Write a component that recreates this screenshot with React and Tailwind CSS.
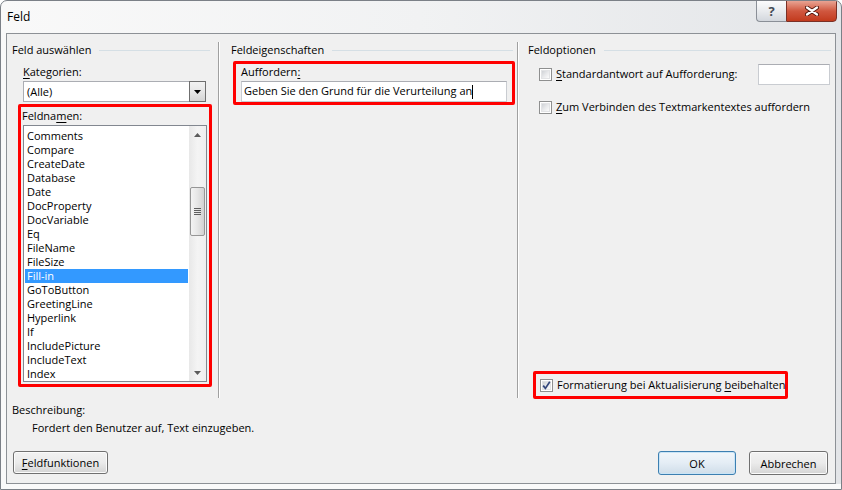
import React from 'react';

const fieldNames = [
  'Comments', 'Compare', 'CreateDate', 'Database', 'Date', 'DocProperty', 'DocVariable', 'Eq', 'FileName',
  'FileSize', 'Fill-in', 'GoToButton', 'GreetingLine', 'Hyperlink', 'If', 'IncludePicture', 'IncludeText', 'Index',
];

const CheckBox = ({ checked }) => (
  <div className="w-[13px] h-[13px] flex-shrink-0 border border-[#8e8f8f] bg-white p-px">
    <div className="relative w-full h-full border border-[#e2e3e5] bg-gradient-to-br from-[#cfd2d6] via-[#e8e9eb] to-[#fbfbfb]">
      {checked && (
        <svg className="absolute -left-[1px] -top-[1px]" width="9" height="9" viewBox="0 0 9 9">
          <path d="M1.2 4.6 L3.4 7.4 L7.8 0.8" fill="none" stroke="#34477c" strokeWidth="1.7" />
        </svg>
      )}
    </div>
  </div>
);

const GroupHeading = ({ title, pad }) => (
  <div className={`flex items-center h-[16px] ${pad}`}>
    <span className="leading-[16px] whitespace-nowrap">{title}</span>
    <div className="flex-1 h-px bg-[#d5dfe5] ml-[8px]" />
  </div>
);

const ScrollBar = () => (
  <div className="w-[17px] flex flex-col bg-gradient-to-r from-[#e8e8e8] via-[#f4f4f4] to-[#efefef]">
    <div className="h-[17px] flex items-center justify-center">
      <svg width="7" height="4" viewBox="0 0 7 4"><path d="M0 4 L3.5 0 L7 4Z" fill="#5c5c5c" /></svg>
    </div>
    <div className="h-[44px]" />
    <div className="h-[49px] mx-px rounded-[2px] border border-[#969696] bg-gradient-to-r from-[#f4f4f4] via-[#e6e6e6] to-[#d2d2d2] flex flex-col items-center justify-center gap-px">
      <div className="w-[7px] h-px bg-[#5e5e5e]" />
      <div className="w-[7px] h-px bg-[#5e5e5e]" />
      <div className="w-[7px] h-px bg-[#5e5e5e]" />
      <div className="w-[7px] h-px bg-[#5e5e5e]" />
    </div>
    <div className="flex-1" />
    <div className="h-[17px] flex items-center justify-center">
      <svg width="7" height="4" viewBox="0 0 7 4"><path d="M0 0 L3.5 4 L7 0Z" fill="#5c5c5c" /></svg>
    </div>
  </div>
);

const Separator = () => (
  <div className="flex h-[356px]">
    <div className="w-px bg-[#a0a0a0]" />
    <div className="w-px bg-white" />
  </div>
);

export default function App() {
  return (
    <div className="w-[842px] h-[490px] flex flex-col overflow-hidden border border-[#7b8087] rounded-t-[7px] bg-gradient-to-r from-[#f9f9f9] via-[#f1f2f3] to-[#e3e5e8] font-['Open_Sans',sans-serif] text-[11px] text-black">
      {/* title bar */}
      <div className="h-[32px] flex items-start justify-between pl-[6px] pr-[4px]">
        <span className="mt-[8px] text-[12px] leading-[16px]">Feld</span>
        <div className="flex -mt-px">
          <div className="w-[30px] h-[22px] flex items-center justify-center rounded-bl-[4px] border border-[#8a8f97] border-r-0 bg-gradient-to-b from-[#fbfbfc] via-[#e9ebee] to-[#d3d7dd]">
            <span className="text-[13px] font-bold leading-none text-[#434a55]">?</span>
          </div>
          <div className="w-[51px] h-[22px] flex items-center justify-center rounded-br-[4px] border border-[#7a3026] bg-gradient-to-b from-[#e8a393] via-[#d0573f] to-[#c23a1c]">
            <svg width="14" height="10" viewBox="0 0 14 10">
              <path d="M2 1.5 L12 8.5 M12 1.5 L2 8.5" stroke="#4d150c" strokeWidth="4" strokeLinecap="round" />
              <path d="M2 1.5 L12 8.5 M12 1.5 L2 8.5" stroke="#ffffff" strokeWidth="2.2" strokeLinecap="round" />
            </svg>
          </div>
        </div>
      </div>

      {/* client area */}
      <div className="mx-[5px] h-[451px] flex-shrink-0 border border-[#8d9196] bg-[#f0f0f0] flex flex-col">
        <div className="flex h-[365px] pt-[8px]">
          {/* Feld auswählen */}
          <div className="w-[211px] flex flex-col">
            <GroupHeading title="Feld auswählen" pad="pl-[5px] pr-[8px]" />
            <div className="mt-[6px] pl-[16px] leading-[16px]"><u className="underline-offset-2">K</u>ategorien:</div>
            <div className="mt-[1px] ml-[16px] w-[183px] h-[21px] flex border border-[#abadb3] bg-white">
              <div className="flex-1 pl-[3px] leading-[19px]">(Alle)</div>
              <div className="w-[17px] -my-px -mr-px flex items-center justify-center border border-[#6f6f6f] bg-gradient-to-b from-[#f2f2f2] via-[#e6e6e6] to-[#d4d4d4]">
                <svg width="7" height="4" viewBox="0 0 7 4"><path d="M0 0 L3.5 4 L7 0Z" fill="#000" /></svg>
              </div>
            </div>
            <div className="mt-[2px] ml-[11px] w-[194px] h-[283px] border-[3px] border-[#ff0000] rounded-[2px] flex flex-col">
              <div className="pl-px pt-px leading-[16px]">Feldna<u className="underline-offset-2">m</u>en:</div>
              <div className="ml-[2px] mt-px w-[184px] h-[257px] border border-[#828790] bg-white flex">
                <div className="flex-1 pt-[3px] px-px">
                  {fieldNames.map((name) => (
                    <div
                      key={name}
                      className={`h-[14px] leading-[14px] pl-[2px] ${name === 'Fill-in' ? 'bg-[#3399ff] text-white' : ''}`}
                    >
                      {name}
                    </div>
                  ))}
                </div>
                <ScrollBar />
              </div>
            </div>
          </div>

          <Separator />

          {/* Feldeigenschaften */}
          <div className="w-[297px] flex flex-col">
            <GroupHeading title="Feldeigenschaften" pad="pl-[11px] pr-[4px]" />
            <div className="mt-[3px] ml-[13px] w-[282px] h-[44px] border-[3px] border-[#ff0000] rounded-[2px] flex flex-col">
              <div className="pl-[5px] leading-[16px]">Auffordern<u className="underline-offset-2">:</u></div>
              <div className="mt-px ml-[5px] w-[266px] h-[21px] flex items-center pl-[2px] border border-[#c9ccd1] border-t-[#abadb3] bg-white whitespace-nowrap">
                Geben Sie den Grund für die Verurteilung an
                <span className="w-px h-[14px] bg-black" />
              </div>
            </div>
          </div>

          <Separator />

          {/* Feldoptionen */}
          <div className="flex-1 flex flex-col">
            <GroupHeading title="Feldoptionen" pad="pl-[9px] pr-[4px]" />
            <div className="mt-[6px] h-[21px] flex items-center pl-[20px] pr-[5px]">
              <CheckBox />
              <span className="ml-[4px] whitespace-nowrap"><u className="underline-offset-2">S</u>tandardantwort auf Aufforderung:</span>
              <div className="ml-auto w-[72px] h-[21px] border border-[#c9ccd1] border-t-[#abadb3] bg-white" />
            </div>
            <div className="mt-[14px] h-[16px] flex items-center pl-[20px]">
              <CheckBox />
              <span className="ml-[4px] whitespace-nowrap"><u className="underline-offset-2">Z</u>um Verbinden des Textmarkentextes auffordern</span>
            </div>
            <div className="flex-1" />
            <div className="ml-[14px] w-[255px] h-[28px] border-[3px] border-[#ff0000] rounded-[2px] flex items-center pl-[4px]">
              <CheckBox checked />
              <span className="ml-[4px] whitespace-nowrap">Formatierung bei Aktualisierung <u className="underline-offset-2">b</u>eibehalten</span>
            </div>
          </div>
        </div>

        {/* Beschreibung */}
        <div className="mt-[3px] pl-[5px] leading-[16px]">Beschreibung:</div>
        <div className="mt-[2px] pl-[25px] leading-[16px]">Fordert den Benutzer auf, Text einzugeben.</div>

        <div className="mt-[15px] flex items-start pr-[7px]">
          <button className="ml-[6px] w-[95px] h-[23px] rounded-[3px] border border-[#707070] bg-gradient-to-b from-[#f2f2f2] via-[#ebebeb] to-[#d4d4d4] shadow-[inset_0_0_0_1px_#fbfbfb] leading-none">
            <u className="underline-offset-2">F</u>eldfunktionen
          </button>
          <button className="ml-auto w-[78px] h-[24px] rounded-[3px] border border-[#3c7fb1] bg-gradient-to-b from-[#f1f6fa] via-[#e4edf5] to-[#cfdde9] shadow-[inset_0_0_0_1px_#c9e4f6] leading-none">
            OK
          </button>
          <button className="ml-[13px] w-[79px] h-[24px] rounded-[3px] border border-[#707070] bg-gradient-to-b from-[#f2f2f2] via-[#ebebeb] to-[#d4d4d4] shadow-[inset_0_0_0_1px_#fbfbfb] leading-none">
            Abbrechen
          </button>
        </div>
      </div>
      <div className="flex-1 bg-[#fafafa]" />
    </div>
  );
}
